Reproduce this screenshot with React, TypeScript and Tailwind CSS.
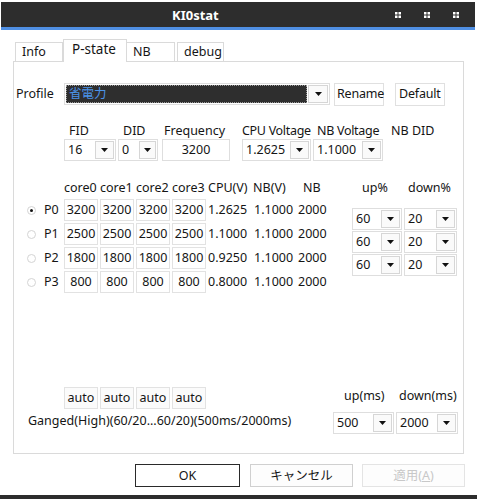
import React from "react";

const Arrow = () => (
  <svg width="7" height="4" viewBox="0 0 7 4">
    <path d="M0 0h7L3.5 4z" fill="#111" />
  </svg>
);

function Combo({
  value,
  w,
  aw = "w-[19px]",
}: {
  value: string;
  w: string;
  aw?: string;
}) {
  return (
    <div className={`flex h-[22px] ${w} border border-[#dedede] bg-white`}>
      <div className="flex-1 flex items-center pl-[3px]">{value}</div>
      <div className={`${aw} my-[1px] mr-[1px] flex items-center justify-center border border-[#d6d6d6] bg-[#fafafa]`}>
        <Arrow />
      </div>
    </div>
  );
}

const Dots = () => (
  <svg width="6" height="6" viewBox="0 0 6 6">
    <rect x="0" y="0" width="2.5" height="2.5" fill="#fff" />
    <rect x="3.5" y="0" width="2.5" height="2.5" fill="#fff" />
    <rect x="0" y="3.5" width="2.5" height="2.5" fill="#fff" />
    <rect x="3.5" y="3.5" width="2.5" height="2.5" fill="#fff" />
  </svg>
);

const Cell = ({ v }: { v: string }) => (
  <div className="w-[34px] h-[22px] border border-[#e2e2e2] bg-white flex items-center justify-center">
    {v}
  </div>
);

const rows = [
  { p: "P0", f: "3200", cv: "1.2625", nv: "1.1000", nb: "2000", sel: true },
  { p: "P1", f: "2500", cv: "1.1000", nv: "1.1000", nb: "2000", sel: false },
  { p: "P2", f: "1800", cv: "0.9250", nv: "1.1000", nb: "2000", sel: false },
  { p: "P3", f: "800", cv: "0.8000", nv: "1.1000", nb: "2000", sel: false },
];

export default function App() {
  return (
    <div
      className="w-[477px] h-[500px] bg-white overflow-hidden whitespace-nowrap text-[12.5px] leading-[16px] text-[#151515]"
      style={{ fontFamily: '"Noto Sans", "Noto Sans CJK JP", sans-serif' }}
    >
      {/* title bar */}
      <div className="h-[2px]" />
      <div className="ml-[1px] mr-[2px] h-[25px] bg-[#2d2d2d] flex items-center">
        <div className="pl-[171px] text-white font-bold text-[13px]">KI0stat</div>
        <div className="ml-auto flex items-center">
          <div className="mr-[23px]"><Dots /></div>
          <div className="mr-[23px]"><Dots /></div>
          <div className="mr-[16px]"><Dots /></div>
        </div>
      </div>
      <div className="ml-[1px] mr-[2px] h-[3px] bg-[#4f8fe3]" />

      {/* tabs */}
      <div className="h-[31px] flex items-end pl-[15px]">
        <div className="w-[48px] h-[19px] border-t border-l border-r border-[#dadada] pl-[6px] flex items-center">
          Info
        </div>
        <div className="relative z-10 w-[64px] h-[23px] -mb-px border-t border-l border-r border-[#dadada] bg-white pl-[8px] pt-[1px] text-[13.5px]">
          P-state
        </div>
        <div className="w-[48px] h-[19px] border-t border-r border-[#dadada] pl-[6px] flex items-center">
          NB
        </div>
        <div className="ml-[2px] w-[47px] h-[19px] border-t border-l border-r border-[#dadada] pl-[6px] flex items-center">
          debug
        </div>
      </div>

      {/* panel */}
      <div className="ml-[13px] w-[451px] h-[393px] border border-[#dadada] flex flex-col">
        {/* profile row */}
        <div className="mt-[21px] flex items-center h-[22px]">
          <div className="w-[50px] pl-[2px]">Profile</div>
          <div className="w-[266px] h-[22px] border border-[#dedede] flex bg-white">
            <div className="flex-1 m-[1px] bg-[#2e2e2e] border border-dotted border-[#9a9a9a] flex items-center pl-[2px] text-[#4b93e8]">
              省電力
            </div>
            <div className="w-[20px] my-[1px] mr-[1px] flex items-center justify-center border border-[#d6d6d6] bg-[#fafafa]">
              <Arrow />
            </div>
          </div>
          <div className="ml-[4px] w-[50px] h-[23px] border border-[#e0e0e0] flex items-center pl-[2px] tracking-[-0.2px]">
            Rename
          </div>
          <div className="ml-[11px] w-[50px] h-[23px] border border-[#e0e0e0] flex items-center pl-[3px] tracking-[-0.2px]">
            Default
          </div>
        </div>

        {/* FID labels */}
        <div className="mt-[17px] flex h-[17px] items-center">
          <div className="ml-[50px] w-[52px] pl-[5px]">FID</div>
          <div className="ml-[2px] w-[40px] pl-[5px]">DID</div>
          <div className="ml-[4px] w-[68px] pl-[2px]">Frequency</div>
          <div className="ml-[12px] w-[71px] tracking-[-0.3px]">CPU Voltage</div>
          <div className="w-[70px] pl-[4px] tracking-[-0.3px]">NB Voltage</div>
          <div className="ml-[8px]">NB DID</div>
        </div>
        <div className="flex">
          <div className="ml-[50px]"><Combo value="16" w="w-[52px]" /></div>
          <div className="ml-[2px]"><Combo value="0" w="w-[40px]" aw="w-[17px]" /></div>
          <div className="ml-[4px] w-[68px] h-[22px] border border-[#dedede] flex items-center justify-center">
            3200
          </div>
          <div className="ml-[12px]"><Combo value="1.2625" w="w-[69px]" /></div>
          <div className="ml-[2px]"><Combo value="1.1000" w="w-[70px]" /></div>
        </div>

        {/* core header */}
        <div className="mt-[19px] flex h-[16px] items-center">
          <div className="ml-[50px] w-[36px]">core0</div>
          <div className="w-[36px]">core1</div>
          <div className="w-[36px]">core2</div>
          <div className="w-[36px]">core3</div>
          <div className="w-[45px]">CPU(V)</div>
          <div className="w-[50px]">NB(V)</div>
          <div className="w-[59px]">NB</div>
          <div className="w-[46px]">up%</div>
          <div>down%</div>
        </div>

        <div className="mt-[3px] flex">
          <div className="w-[338px] flex flex-col gap-[2px]">
            {rows.map((r) => (
              <div key={r.p} className="flex h-[22px] items-center">
                <div className="w-[30px] pl-[13px] flex items-center">
                  <div className="w-[9px] h-[9px] rounded-full border border-[#d4d4d4] bg-white flex items-center justify-center">
                    {r.sel && <div className="w-[3px] h-[3px] rounded-full bg-[#111]" />}
                  </div>
                </div>
                <div className="w-[20px]">{r.p}</div>
                <div className="flex gap-[2px]">
                  <Cell v={r.f} />
                  <Cell v={r.f} />
                  <Cell v={r.f} />
                  <Cell v={r.f} />
                </div>
                <div className="ml-[2px] w-[46px]">{r.cv}</div>
                <div className="w-[44px]">{r.nv}</div>
                <div>{r.nb}</div>
              </div>
            ))}
          </div>
          <div className="mt-[9px] flex flex-col gap-[1px]">
            {[0, 1, 2].map((i) => (
              <div key={i} className="flex gap-[2px]">
                <Combo value="60" w="w-[50px]" />
                <Combo value="20" w="w-[53px]" />
              </div>
            ))}
          </div>
        </div>

        {/* bottom section */}
        <div className="mt-auto mb-[19px] flex">
          <div className="w-[319px]">
            <div className="ml-[50px] flex gap-[2px]">
              {[0, 1, 2, 3].map((i) => (
                <div
                  key={i}
                  className="w-[34px] h-[22px] border border-[#e2e2e2] bg-[#fbfbfb] flex items-center justify-center"
                >
                  auto
                </div>
              ))}
            </div>
            <div className="mt-[4px] pl-[14px] h-[16px]">
              Ganged(High)(60/20...60/20)(500ms/2000ms)
            </div>
          </div>
          <div>
            <div className="flex h-[17px] items-center">
              <div className="pl-[11px] w-[66px]">up(ms)</div>
              <div>down(ms)</div>
            </div>
            <div className="mt-[8px] flex gap-[2px]">
              <Combo value="500" w="w-[61px]" />
              <Combo value="2000" w="w-[62px]" />
            </div>
          </div>
        </div>
      </div>

      {/* buttons */}
      <div className="mt-[10px] flex h-[23px]">
        <div className="ml-[135px] w-[105px] h-[23px] border border-[#2a2a2a] bg-white flex items-center justify-center">
          OK
        </div>
        <div className="ml-[10px] w-[103px] h-[23px] border border-[#d0d0d0] bg-[#fdfdfd] flex items-center justify-center">
          キャンセル
        </div>
        <div className="ml-[9px] w-[103px] h-[23px] border border-[#e4e4e4] bg-[#fdfdfd] flex items-center justify-center text-[#c8c8c8]">
          適用(<span className="underline">A</span>)
        </div>
      </div>
      <div className="mt-[8px] h-[4px] bg-[#2d2d2d]" />
    </div>
  );
}
